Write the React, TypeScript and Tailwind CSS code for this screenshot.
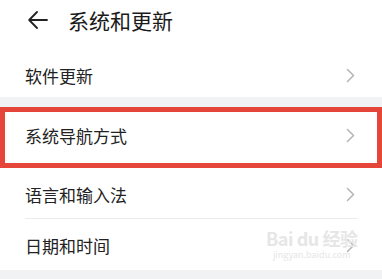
const font = {
  fontFamily: '"Noto Sans CJK SC", "Noto Sans", sans-serif',
};

function Chevron() {
  return (
    <svg width="9" height="15" viewBox="0 0 9 15" fill="none">
      <polyline
        points="1.5,1.5 7.5,7.5 1.5,13.5"
        stroke="#b4b4b4"
        strokeWidth="1.5"
        strokeLinecap="round"
        strokeLinejoin="round"
      />
    </svg>
  );
}

function Row({ label, className }: { label: string; className: string }) {
  return (
    <div className={`flex items-center justify-between pl-[25px] pr-[27px] ${className}`}>
      <span className="text-[17px] leading-none text-[#222222]">{label}</span>
      <Chevron />
    </div>
  );
}

export default function App() {
  return (
    <div className="relative w-[382px] h-[279px] overflow-hidden bg-white" style={font}>
      <div className="flex h-[50px] items-center pb-[10px] pl-[28px]">
        <svg width="20" height="18" viewBox="0 0 20 18" fill="none">
          <path
            d="M19 9H1.5M9 1L1.2 9L9 17"
            stroke="#222222"
            strokeWidth="1.8"
            strokeLinecap="round"
            strokeLinejoin="round"
          />
        </svg>
        <span className="ml-[20px] text-[21px] leading-none text-[#1a1a1a]">系统和更新</span>
      </div>

      <Row label="软件更新" className="h-[47px] pt-[3px]" />

      <div className="h-[10px] bg-[#f1f2f4]" />

      <div className="flex h-[61px] items-center justify-between border-[5px] border-[#e6463a] pb-[4px] pl-[20px] pr-[22px]">
        <span className="text-[17px] leading-none text-[#222222]">系统导航方式</span>
        <Chevron />
      </div>

      <Row label="语言和输入法" className="h-[50px] pt-[2px]" />
      <div className="ml-[25px] mr-[24px] h-px bg-[#ececec]" />
      <Row label="日期和时间" className="h-[51px] pt-[1px]" />

      <div className="h-[9px] bg-[#f1f2f4]" />

      <div className="pointer-events-none absolute left-[266px] top-[229px] flex flex-col items-center gap-[3px] text-[#e6e6e6]">
        <span className="text-[18px] font-bold leading-[18px] tracking-tight">Bai du 经验</span>
        <span className="text-[9px] leading-[10px]">jingyan.baidu.com</span>
      </div>
    </div>
  );
}
